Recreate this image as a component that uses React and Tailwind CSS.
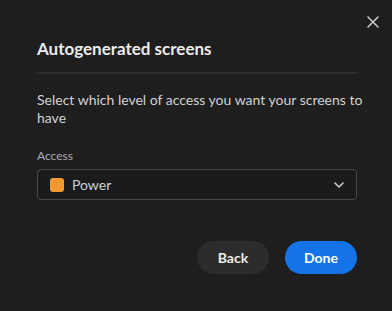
export default function App() {
  return (
    <div
      className="relative w-[392px] h-[311px] bg-[#1e1e1e] text-white overflow-hidden"
      style={{ fontFamily: 'Lato, "Liberation Sans", Arial, sans-serif' }}
    >
      <button className="absolute left-[367px] top-[15px] w-[12px] h-[13px] flex items-center justify-center text-[#c8c8c8]">
        <svg width="12" height="12" viewBox="0 0 12 12" fill="none" stroke="currentColor" strokeWidth="1.6" strokeLinecap="round">
          <path d="M1 1L11 11M11 1L1 11" />
        </svg>
      </button>
      <div className="flex flex-col pl-[37px] pr-[35px] pt-[39px]">
        <h1 className="text-[17px] leading-[20px] font-bold text-[#ececec]">Autogenerated screens</h1>
        <div className="mt-[13px] h-[2px] bg-[#2e2e2e]" />
        <p className="mt-[17px] w-[330px] text-[14px] leading-[18px] text-[#d2d2d2]">
          Select which level of access you want your screens to have
        </p>
        <div className="mt-[22px] text-[12px] leading-[14px] text-[#acacac]">Access</div>
        <div className="mt-[6px] h-[31px] rounded-[4px] border border-[#494949] bg-[#1b1b1b] flex items-center pl-[12px] pr-[12px]">
          <span className="w-[14px] h-[14px] rounded-[3px] bg-[#f29a32]" />
          <span className="ml-[8px] text-[14px] text-[#d0d0d0]">Power</span>
          <svg className="ml-auto text-[#cfcfcf]" width="10" height="6" viewBox="0 0 10 6" fill="none" stroke="currentColor" strokeWidth="1.6" strokeLinecap="round" strokeLinejoin="round">
            <path d="M1 1L5 5L9 1" />
          </svg>
        </div>
        <div className="mt-[41px] flex justify-end gap-[16px]">
          <button className="w-[72px] h-[33px] rounded-full bg-[#2c2c2c] text-[14px] font-bold text-[#ececec]">Back</button>
          <button className="w-[72px] h-[33px] rounded-full bg-[#1473e6] text-[14px] font-bold text-white">Done</button>
        </div>
      </div>
    </div>
  );
}
